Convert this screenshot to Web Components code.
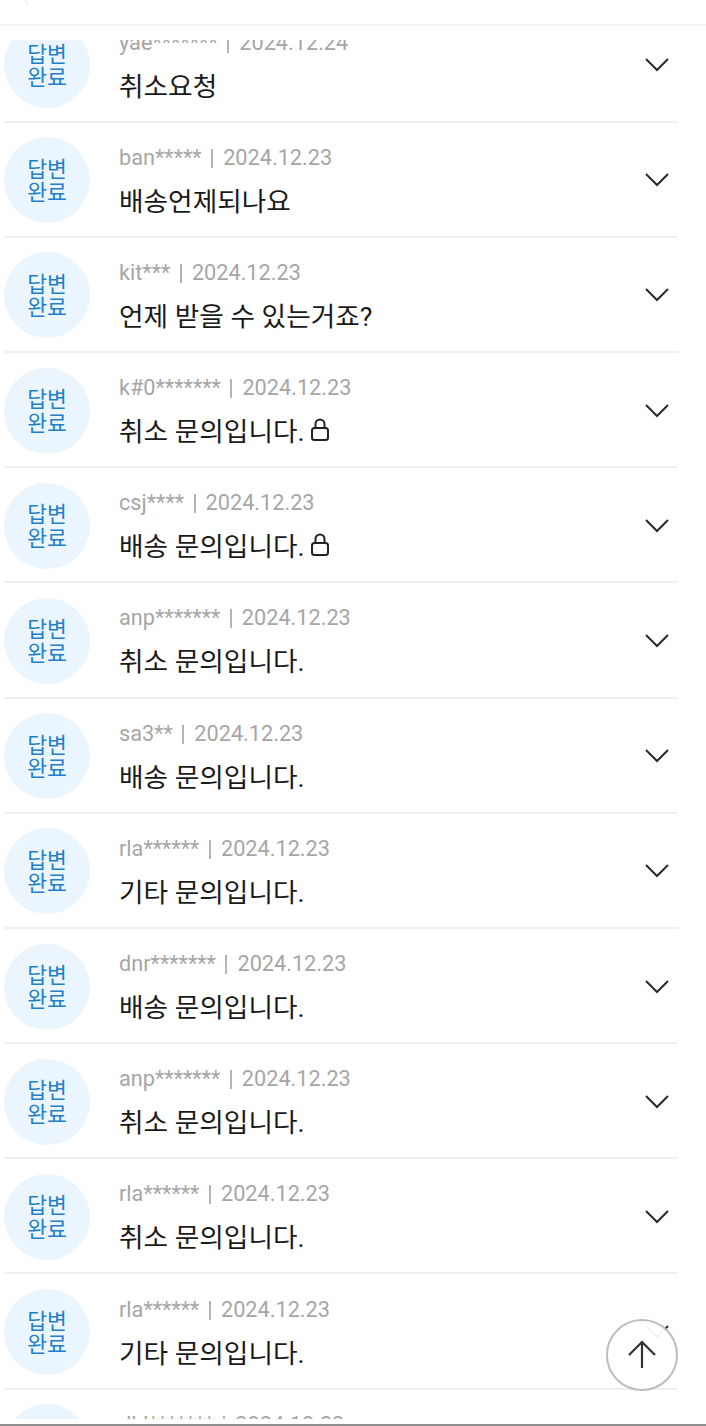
<!DOCTYPE html>
<html lang="ko">
<head>
<meta charset="utf-8">
<title>문의</title>
<style>
  html, body { margin: 0; padding: 0; background: #fff; }
  body { width: 706px; height: 1426px; overflow: hidden; position: relative; font-family: Roboto, "Noto Sans CJK KR", sans-serif; }
</style>
</head>
<body>
<qna-page>
  <qna-row name="yae*******" date="2024.12.24" title="취소요청"></qna-row>
  <qna-row name="ban*****" date="2024.12.23" title="배송언제되나요"></qna-row>
  <qna-row name="kit***" date="2024.12.23" title="언제 받을 수 있는거죠?"></qna-row>
  <qna-row name="k#0*******" date="2024.12.23" title="취소 문의입니다." locked></qna-row>
  <qna-row name="csj****" date="2024.12.23" title="배송 문의입니다." locked></qna-row>
  <qna-row name="anp*******" date="2024.12.23" title="취소 문의입니다."></qna-row>
  <qna-row name="sa3**" date="2024.12.23" title="배송 문의입니다."></qna-row>
  <qna-row name="rla******" date="2024.12.23" title="기타 문의입니다."></qna-row>
  <qna-row name="dnr*******" date="2024.12.23" title="배송 문의입니다."></qna-row>
  <qna-row name="anp*******" date="2024.12.23" title="취소 문의입니다."></qna-row>
  <qna-row name="rla******" date="2024.12.23" title="취소 문의입니다."></qna-row>
  <qna-row name="rla******" date="2024.12.23" title="기타 문의입니다."></qna-row>
  <qna-row name="dlJ*******" date="2024.12.23" title="기타 문의입니다."></qna-row>
</qna-page>
<scroll-top></scroll-top>
<script>
class QnaPage extends HTMLElement {
  connectedCallback() {
    this.attachShadow({ mode: 'open' });
    this.shadowRoot.innerHTML = `
      <style>
        :host { display: flex; flex-direction: column; height: 1426px; background: #fff; }
        header { height: 24px; border-bottom: 2px solid #f3f3f3; flex: none; }
        header svg { display: block; margin-left: 24px; }
        .list { margin-top: 14px; flex: 1; overflow: hidden; }
        .inner { margin-top: -32.6px; padding-left: 4px; width: 674px; }
        footer { height: 2px; background: #8e8e8e; flex: none; margin-top: 5px; }
      </style>
      <header><svg width="6" height="6" viewBox="0 0 6 6" fill="none" stroke="#e4e4e4" stroke-width="1"><path d="M1 0l3 4"/></svg></header>
      <div class="list"><div class="inner"><slot></slot></div></div>
      <footer></footer>
    `;
  }
}

class QnaRow extends HTMLElement {
  connectedCallback() {
    const locked = this.hasAttribute('locked');
    this.attachShadow({ mode: 'open' });
    this.shadowRoot.innerHTML = `
      <style>
        :host { display: flex; align-items: center; height: 115.2px; box-sizing: border-box; padding-top: 2px; border-bottom: 2px solid #f0f0f0; }
        .badge { flex: none; width: 86px; height: 86px; box-sizing: border-box; padding-bottom: 2px; border-radius: 50%; background: #ebf5fd; color: #1f7fc8; display: flex; align-items: center; justify-content: center; text-align: center; font: 21.5px/23.5px "Noto Sans CJK KR", sans-serif; }
        .body { flex: 1; margin-left: 29px; min-width: 0; padding-top: 3px; }
        .meta { display: flex; align-items: center; color: #a6a6a6; font: 21.7px/28px Roboto, "Noto Sans CJK KR", sans-serif; white-space: pre; }
        .sep { width: 2px; height: 19px; background: #b4b4b4; margin: 1px 10px 0 9.5px; }
        .title { display: flex; align-items: center; margin-top: 12px; color: #1a1a1a; font: 26.7px/36px Roboto, "Noto Sans CJK KR", sans-serif; white-space: pre; }
        .title svg { margin-left: 5px; margin-top: -5px; }
        .chev { flex: none; margin-right: 8px; }
      </style>
      <div class="badge">답변<br>완료</div>
      <div class="body">
        <div class="meta"><span>${this.getAttribute('name')}</span><i class="sep"></i><span>${this.getAttribute('date')}</span></div>
        <div class="title">${this.getAttribute('title')}${locked ? `<svg width="20" height="23" viewBox="0 0 20 23" fill="none" stroke="#222" stroke-width="2"><rect x="2" y="10" width="16" height="12" rx="2.5"/><path d="M5.5 10V6a4.5 4.5 0 0 1 9 0v4"/></svg>` : ''}</div>
      </div>
      <svg class="chev" width="26" height="16" viewBox="0 0 26 16" fill="none" stroke="#2a2a2a" stroke-width="2"><path d="M2 2l11 11L24 2"/></svg>
    `;
  }
}

class ScrollTop extends HTMLElement {
  connectedCallback() {
    this.attachShadow({ mode: 'open' });
    this.shadowRoot.innerHTML = `
      <style>
        :host { position: absolute; left: 606px; top: 1319px; width: 72px; height: 72px; box-sizing: border-box; border: 2px solid #bdbdbd; border-radius: 50%; background: rgba(255,255,255,.95); display: flex; align-items: center; justify-content: center; }
      </style>
      <svg width="30" height="30" viewBox="0 0 30 30" fill="none" stroke="#333" stroke-width="2.2"><path d="M15 28V2M2 15L15 2l13 13"/></svg>
    `;
  }
}

customElements.define('qna-page', QnaPage);
customElements.define('qna-row', QnaRow);
customElements.define('scroll-top', ScrollTop);
</script>
</body>
</html>
